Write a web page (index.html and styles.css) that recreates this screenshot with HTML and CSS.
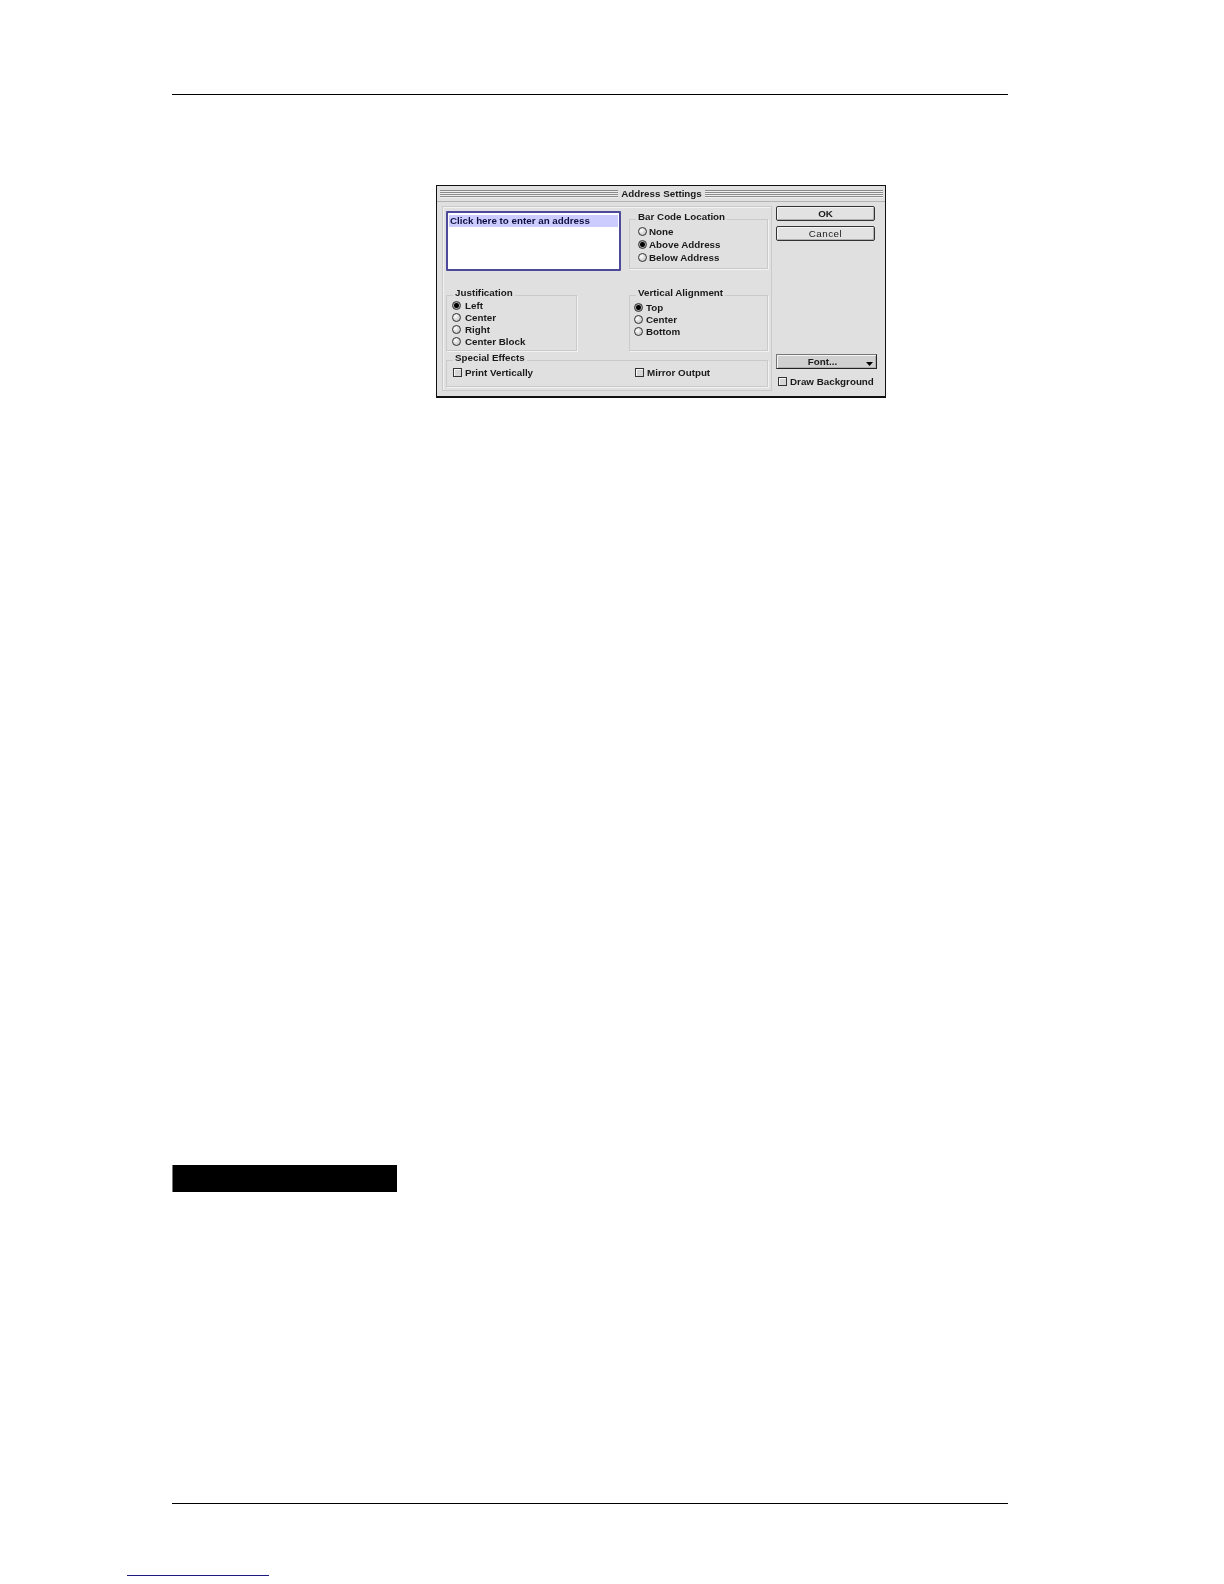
FILE: index.html
```html
<!DOCTYPE html>
<html lang="en">
<head>
<meta charset="utf-8">
<title>Address Settings</title>
<link rel="stylesheet" href="styles.css">
</head>
<body>
<div class="page">
  <hr class="rule rule-top">
  <div class="dialog">
    <div class="titlebar">
      <span class="stripes"></span>
      <span class="title">Address Settings</span>
      <span class="stripes"></span>
    </div>
    <div class="content">
      <div class="panel">
        <div class="row row-one">
          <div class="address">
            <div class="address-line">Click here to enter an address</div>
          </div>
          <div class="group group-barcode">
            <span class="legend">Bar Code Location</span>
            <div class="opt"><span class="radio"></span>None</div>
            <div class="opt"><span class="radio on"></span>Above Address</div>
            <div class="opt"><span class="radio"></span>Below Address</div>
          </div>
        </div>
        <div class="row row-two">
          <div class="group group-just">
            <span class="legend">Justification</span>
            <div class="opt"><span class="radio on"></span>Left</div>
            <div class="opt"><span class="radio"></span>Center</div>
            <div class="opt"><span class="radio"></span>Right</div>
            <div class="opt"><span class="radio"></span>Center Block</div>
          </div>
          <div class="group group-valign">
            <span class="legend">Vertical Alignment</span>
            <div class="opt"><span class="radio on"></span>Top</div>
            <div class="opt"><span class="radio"></span>Center</div>
            <div class="opt"><span class="radio"></span>Bottom</div>
          </div>
        </div>
        <div class="group group-special">
          <span class="legend">Special Effects</span>
          <div class="opt check-opt"><span class="check"></span>Print Vertically</div>
          <div class="opt check-opt"><span class="check"></span>Mirror Output</div>
        </div>
      </div>
      <div class="side">
        <div class="btn btn-ok">OK</div>
        <div class="btn btn-cancel">Cancel</div>
        <div class="btn btn-font">Font...<svg class="arrow" viewBox="0 0 7 4" width="7" height="4"><path d="M0 0H7L3.5 4Z"/></svg></div>
        <div class="opt check-opt bg-opt"><span class="check"></span>Draw Background</div>
      </div>
    </div>
  </div>
  <div class="black-bar"></div>
  <hr class="rule rule-bottom">
  <div class="link-line"></div>
</div>
</body>
</html>
```

FILE: styles.css
```css
html, body { margin: 0; padding: 0; background: #fff; }
.page { width: 1224px; height: 1584px; padding-top: 94px; box-sizing: border-box; display: flow-root; }
.rule { border: 0; height: 1px; background: #000; margin: 0; }
.rule-top { width: 836px; margin-left: 172px; }
.dialog {
  width: 450px; height: 213px; margin: 90px 0 0 436px; box-sizing: border-box;
  border: 1px solid #111; border-bottom-width: 2px; background: #e0e0e0;
  font-family: "Liberation Sans", Arial, sans-serif; font-size: 9.8px; font-weight: 700; color: #1a1a1a;
  display: flex; flex-direction: column; filter: blur(0.4px);
}
.titlebar { height: 15px; display: flex; align-items: center; gap: 3px; padding: 0 2px 0 3px; border-bottom: 1px solid #b4b4b4; flex: none; }
.stripes { flex: 1; height: 8px; background: repeating-linear-gradient(#8a8a8a 0 1px, #efefef 1px 2px); }
.content { flex: 1; display: flex; padding: 4px 2px 5px 5px; gap: 4px; }
.panel { width: 330px; flex: none; box-sizing: border-box; border: 1px solid #cacaca; box-shadow: inset 1px 1px 0 #f2f2f2; padding: 4px 3px 0 3px; display: flex; flex-direction: column; }
.row { display: flex; justify-content: space-between; }
.row-one { height: 60px; }
.row-two { height: 56px; margin-top: 24px; }
.address { width: 175px; height: 60px; box-sizing: border-box; border: 2px solid #4d4a9c; background: #fff; padding: 2px 1px; border-radius: 1px; }
.address-line { background: #ccccff; height: 12px; line-height: 12px; padding-left: 1px; color: #101040; white-space: nowrap; }
.group { position: relative; box-sizing: border-box; border: 1px solid #cacaca; box-shadow: 1px 1px 0 #f2f2f2; padding: 5px 0 0 8px; }
.legend { position: absolute; top: -9px; left: 6px; background: #e0e0e0; padding: 0 2px; line-height: 12px; white-space: nowrap; }
.group-barcode { width: 139px; height: 50px; margin-top: 8px; padding-left: 8px; }
.group-barcode .opt { height: 13px; }
.group-barcode .radio { margin-right: 2px; }
.group-just { width: 131px; height: 56px; padding-top: 3px; padding-left: 5px; }
.group-just .opt { height: 12px; }
.group-valign { width: 139px; height: 56px; padding-top: 5px; padding-left: 4px; }
.group-valign .opt { height: 12px; }
.group-valign .radio { margin-right: 3px; }
.group-special { height: 27px; margin-top: 9px; display: flex; padding: 2px 0 0 6px; width: 322px; }
.group-special .check-opt { flex: none; width: 182px; height: 18px; }
.group-special .check-opt + .check-opt { width: 120px; }
.opt { display: flex; align-items: center; white-space: nowrap; }
.radio { width: 9px; height: 9px; box-sizing: border-box; border: 1px solid #333; border-radius: 50%; margin-right: 4px; flex: none; background: radial-gradient(circle at 35% 35%, #fff, #b4b4b4); }
.radio.on { background: radial-gradient(circle, #000 0 2px, #aaa 3px); }
.check { width: 9px; height: 9px; box-sizing: border-box; border: 1px solid #333; box-shadow: inset 1px 1px 0 #f8f8f8; background: #d6d6d6; margin-right: 3px; flex: none; }
.side { flex: 1; display: flex; flex-direction: column; align-items: flex-start; }
.btn { width: 99px; height: 15px; box-sizing: border-box; border: 1px solid #333; border-radius: 2px; background: #e2e2e2; box-shadow: inset 1px 1px 0 #f4f4f4, inset -1px -1px 0 #b0b0b0; display: flex; align-items: center; justify-content: center; position: relative; }
.btn-cancel { margin-top: 5px; font-weight: 400; letter-spacing: 0.5px; }
.btn-font { margin-top: 113px; width: 101px; border-color: #777 #222 #222 #777; background: #d0d0d0; border-radius: 0; padding-right: 8px; }
.arrow { position: absolute; right: 3px; bottom: 2px; fill: #000; }
.bg-opt { margin: 7px 0 0 2px; }
.black-bar { width: 225px; height: 27px; box-sizing: border-box; border-left: 1px solid #777; margin: 767px 0 0 172px; background: #000; }
.rule-bottom { width: 836px; margin: 311px 0 0 172px; }
.link-line { width: 142px; height: 1px; background: #1a1a80; margin: 71px 0 0 127px; }
```
